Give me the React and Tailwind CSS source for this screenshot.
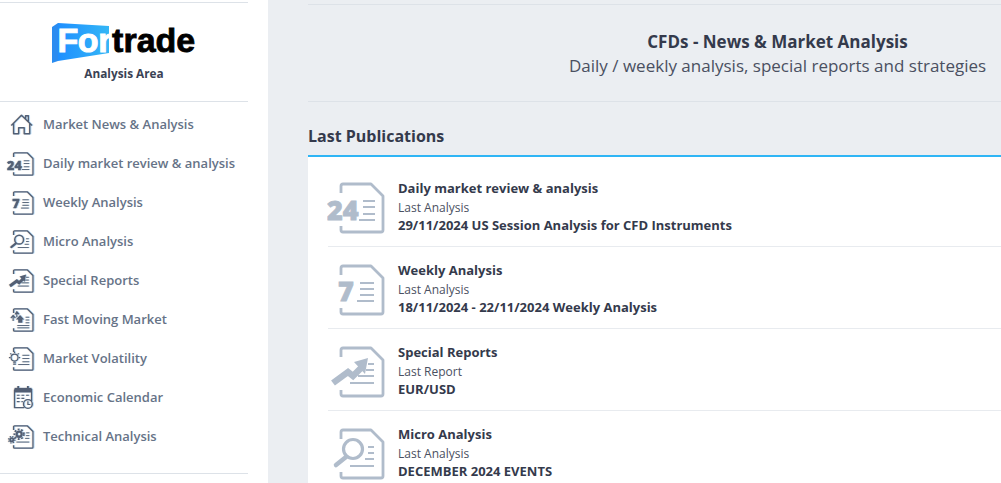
import React from 'react';

const FONT = { fontFamily: '"Open Sans", sans-serif' };
const LOGO_FONT = { fontFamily: '"Liberation Sans", sans-serif' };

// chamfered document outline in a 58x52 box, left edge is open for the glyph
const Sheet = ({ children }) => (
  <>
    <path
      d="M14 11V4Q14 2 16 2H44L56 14V48Q56 50 54 50H16Q14 50 14 48V44"
      fill="none"
      stroke="currentColor"
      strokeWidth="2.8"
      strokeLinejoin="round"
    />
    {children}
  </>
);

const Rules = ({ d }) => <path d={d} fill="none" stroke="currentColor" strokeWidth="2" />;

const Digits = ({ x, y, children }) => (
  <text x={x} y={y} fontSize="27" fontWeight="800" fill="currentColor" stroke="currentColor" strokeWidth="0.8" style={FONT}>
    {children}
  </text>
);

const Icon24 = () => (
  <Sheet>
    <Digits x="0" y="38">24</Digits>
    <Rules d="M36 19H48M36 25H48M36 32H48M32 38H48" />
  </Sheet>
);

const Icon7 = () => (
  <Sheet>
    <Digits x="11" y="37">7</Digits>
    <Rules d="M33 19H47M33 25H47M33 31H47M30 37H47" />
  </Sheet>
);

const IconTrend = () => (
  <Sheet>
    <path d="M6 37L21 26L26 30L36 20" fill="none" stroke="currentColor" strokeWidth="6.5" />
    <path d="M27 16L41 12L38 28Z" fill="currentColor" />
    <Rules d="M41 18H47M39 24H47M31 30H47M23 37H47" />
  </Sheet>
);

const IconSearch = () => (
  <Sheet>
    <circle cx="26" cy="21" r="9.5" fill="none" stroke="currentColor" strokeWidth="3.2" />
    <path d="M19 29L9 37" stroke="currentColor" strokeWidth="4.5" strokeLinecap="round" />
    <Rules d="M41 19H47M41 25H47M38 31H47M23 38H47" />
  </Sheet>
);

const IconFast = () => (
  <Sheet>
    <path d="M13 28V18M8 22L13 16L18 22M21 20V10M17 14L21 8L26 14" fill="none" stroke="currentColor" strokeWidth="2.5" />
    <path d="M24 32V25H19L28 15L37 25H33V32Z" fill="currentColor" />
    <Rules d="M40 20H48M40 26H48M40 32H48M22 38H48M22 43H48" />
  </Sheet>
);

const IconBulb = () => (
  <Sheet>
    <circle cx="16" cy="23" r="7.5" fill="none" stroke="currentColor" strokeWidth="2.5" />
    <path d="M13 33H19M13 37H19M16 10V13M4 23H7M25 23H28M7 14L9 16M25 14L23 16" stroke="currentColor" strokeWidth="2.5" />
    <Rules d="M33 18H48M33 25H48M33 32H48M24 38H48" />
  </Sheet>
);

const IconGears = () => (
  <Sheet>
    <circle cx="26" cy="20" r="5.5" fill="none" stroke="currentColor" strokeWidth="5" />
    <circle cx="26" cy="20" r="10.5" fill="none" stroke="currentColor" strokeWidth="3.5" strokeDasharray="4 3.5" />
    <circle cx="10" cy="32" r="3.5" fill="none" stroke="currentColor" strokeWidth="4" />
    <circle cx="10" cy="32" r="7" fill="none" stroke="currentColor" strokeWidth="2.5" strokeDasharray="3 2.5" />
    <Rules d="M41 17H48M41 23H48M39 29H48M20 37H48" />
  </Sheet>
);

const IconCalendar = () => (
  <>
    <path d="M16 8H53V33M37 47H16V8" fill="none" stroke="currentColor" strokeWidth="2.8" />
    <path d="M16 4H53V14H16Z" fill="currentColor" />
    <path d="M24 0V6M45 0V6" stroke="currentColor" strokeWidth="4" />
    <path d="M21 20H27M31 20H37M41 20H47M21 27H27M31 27H37M21 34H27M31 34H34" stroke="currentColor" strokeWidth="2.6" />
    <circle cx="45" cy="39" r="9.5" fill="none" stroke="currentColor" strokeWidth="3" />
    <path d="M45 33V40H50" fill="none" stroke="currentColor" strokeWidth="2.5" />
  </>
);

const IconHome = () => (
  <path
    d="M9 27L31 5L54 27M14 23V45H25V32H37V45H49V23M40 13V6H46V19"
    fill="none"
    stroke="currentColor"
    strokeWidth="3"
    strokeLinejoin="round"
  />
);

const Glyph = ({ as: Comp, className }) => (
  <svg viewBox="0 0 58 52" className={className}>
    <Comp />
  </svg>
);

const navItems = [
  { label: 'Market News & Analysis', icon: IconHome },
  { label: 'Daily market review & analysis', icon: Icon24 },
  { label: 'Weekly Analysis', icon: Icon7 },
  { label: 'Micro Analysis', icon: IconSearch },
  { label: 'Special Reports', icon: IconTrend },
  { label: 'Fast Moving Market', icon: IconFast },
  { label: 'Market Volatility', icon: IconBulb },
  { label: 'Economic Calendar', icon: IconCalendar },
  { label: 'Technical Analysis', icon: IconGears },
];

const publications = [
  { title: 'Daily market review & analysis', sub: 'Last Analysis', last: '29/11/2024 US Session Analysis for CFD Instruments', icon: Icon24 },
  { title: 'Weekly Analysis', sub: 'Last Analysis', last: '18/11/2024 - 22/11/2024 Weekly Analysis', icon: Icon7 },
  { title: 'Special Reports', sub: 'Last Report', last: 'EUR/USD', icon: IconTrend },
  { title: 'Micro Analysis', sub: 'Last Analysis', last: 'DECEMBER 2024 EVENTS', icon: IconSearch },
];

const Logo = () => (
  <div className="relative flex h-[40px] w-[145px] items-start">
    <svg viewBox="0 0 145 40" className="absolute inset-0 h-full w-full">
      <defs>
        <linearGradient id="logoBlue" x1="0" x2="1" y1="0" y2="0">
          <stop offset="0" stopColor="#1f8fff" />
          <stop offset="1" stopColor="#33b6f6" />
        </linearGradient>
      </defs>
      <path d="M6 0L57 3V30L6 38Z" fill="url(#logoBlue)" />
      <path d="M0 4L6 0V38L0 40Z" fill="#2a8cf0" />
    </svg>
    <span className="relative ml-[6px] text-[34px] font-bold leading-[34px] tracking-[-0.4px] text-white [-webkit-text-stroke:1px_white]" style={LOGO_FONT}>
      For
    </span>
    <span className="relative ml-[1px] text-[34px] font-bold leading-[34px] text-black [-webkit-text-stroke:0.8px_black]" style={LOGO_FONT}>
      trade
    </span>
  </div>
);

const Sidebar = () => (
  <aside className="w-[268px] shrink-0 bg-white pr-[20px] pt-[2px]">
    <div className="flex h-[100px] flex-col items-center border-y border-[#dde2e8] pt-[20px]">
      <Logo />
      <div className="mt-[2px] text-[11.8px] font-bold leading-[16px] text-[#3a4254]">Analysis Area</div>
    </div>
    <nav className="flex h-[372px] flex-col border-b border-[#dde2e8] pt-[3px]">
      {navItems.map((item) => (
        <div key={item.label} className="flex h-[39px] shrink-0 items-center">
          <div className="flex w-[43px] shrink-0 pl-[7px]">
            <Glyph
              as={item.icon}
              className="h-[24px] w-[27px] text-[#535f74] [filter:drop-shadow(1px_0_0_rgba(80,170,240,.4))_drop-shadow(-1px_0_0_rgba(230,170,110,.2))]"
            />
          </div>
          <span className="text-[13px] font-semibold text-[#667387]">{item.label}</span>
        </div>
      ))}
    </nav>
  </aside>
);

const PubRow = ({ item }) => (
  <div className="flex h-[82px] shrink-0 items-start border-b border-[#e8ebef] pt-[17px]">
    <Glyph as={item.icon} className="-ml-[1px] h-[52px] w-[58px] shrink-0 text-[#b0bccb]" />
    <div className="-mt-[4px] ml-[13px] flex flex-col">
      <div className="text-[13px] font-bold leading-[20px] text-[#343a4c]">{item.title}</div>
      <div className="text-[12px] leading-[19px] text-[#4a5061]">{item.sub}</div>
      <div className="text-[13px] font-bold leading-[17px] text-[#343a4c]">{item.last}</div>
    </div>
  </div>
);

export default function App() {
  return (
    <div className="flex h-[483px] w-[1001px] overflow-hidden bg-[#ebeef2]" style={FONT}>
      <Sidebar />
      <main className="flex min-w-0 flex-1 flex-col pl-[40px] pt-[4px]">
        <header className="flex h-[98px] shrink-0 flex-col items-end border-y border-[#dde2e8] pr-[15px] pt-[24px]">
          <div className="w-[417px] whitespace-nowrap text-center">
            <div className="text-[17px] font-bold leading-[25px] text-[#343a4c]">CFDs - News &amp; Market Analysis</div>
            <div className="-mt-[1px] text-[17px] leading-[25px] text-[#4a5061]">Daily / weekly analysis, special reports and strategies</div>
          </div>
        </header>
        <h2 className="mt-[23px] h-[30px] shrink-0 text-[16px] font-bold leading-[22px] text-[#343a4c]">Last Publications</h2>
        <section className="flex flex-1 flex-col border-t-2 border-[#2fb5f5] bg-white pl-[20px] pt-[8px]">
          {publications.map((item) => (
            <PubRow key={item.title} item={item} />
          ))}
        </section>
      </main>
    </div>
  );
}
